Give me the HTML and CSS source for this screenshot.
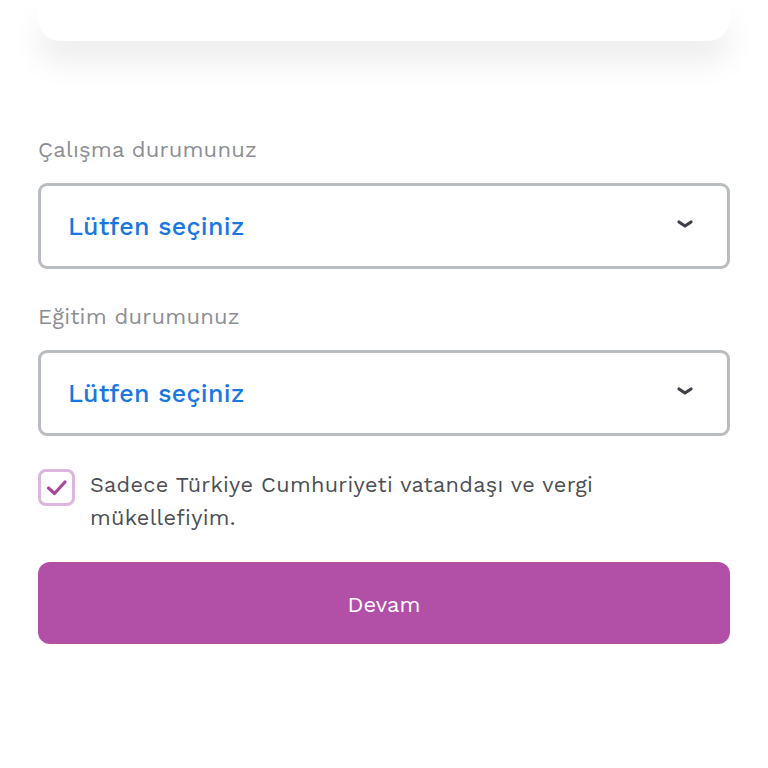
FILE: index.html
```html
<!DOCTYPE html>
<html lang="tr">

<head>
    <meta charset="UTF-8">
    <meta name="viewport" content="width=device-width, initial-scale=1.0">
    <title>Bilgiler</title>
    <link rel="stylesheet" href="styles.css">
</head>

<body>

    <!-- Top card (scrolled) -->
    <div class="top-card"></div>

    <form class="form">

        <div class="field">
            <label class="field-label" for="calisma">Çalışma durumunuz</label>
            <div class="select-box" id="calisma">
                <span class="select-text">Lütfen seçiniz</span>
                <svg class="chevron" width="18" height="10" viewBox="0 0 18 10">
                    <path d="M3 3 L9 7 L15 3" fill="none" stroke="#3d4046" stroke-width="3.2" stroke-linecap="round" stroke-linejoin="round"/>
                </svg>
            </div>
        </div>

        <div class="field">
            <label class="field-label" for="egitim">Eğitim durumunuz</label>
            <div class="select-box" id="egitim">
                <span class="select-text">Lütfen seçiniz</span>
                <svg class="chevron" width="18" height="10" viewBox="0 0 18 10">
                    <path d="M3 3 L9 7 L15 3" fill="none" stroke="#3d4046" stroke-width="3.2" stroke-linecap="round" stroke-linejoin="round"/>
                </svg>
            </div>
        </div>

        <!-- Checkbox -->
        <div class="check-row">
            <span class="check-box">
                <svg width="24" height="20" viewBox="0 0 24 20">
                    <path d="M3.5 10 L9.5 15.5 L20 4" fill="none" stroke="#a8479c" stroke-width="3.2" stroke-linecap="round" stroke-linejoin="round"/>
                </svg>
            </span>
            <span class="check-text">Sadece Türkiye Cumhuriyeti vatandaşı ve vergi mükellefiyim.</span>
        </div>

        <button type="button" class="main-btn">Devam</button>

    </form>

</body>

</html>
```

FILE: styles.css
```css
body {
    margin: 0;
    background-color: #fff;
    font-family: "Work Sans", "Open Sans", "Noto Sans", sans-serif;
    width: 768px;
    overflow: hidden;
}

/*-------------- Top card --------------*/
.top-card {
    margin: 0 38px;
    height: 41px;
    background-color: #fff;
    border-radius: 0 0 22px 22px;
    box-shadow: 0 22px 30px rgba(0, 0, 0, 0.07);
}

/*-------------- Form --------------*/
.form {
    display: flex;
    flex-direction: column;
    padding: 93px 38px 0 38px;
}

.field {
    display: flex;
    flex-direction: column;
    margin-bottom: 32px;
}

.field-label {
    font-size: 22px;
    color: #8b8e93;
    line-height: 32px;
    margin-bottom: 17px;
    letter-spacing: 0.2px;
}

.select-box {
    height: 80px;
    border: 3px solid #b9bcc0;
    border-radius: 9px;
    display: flex;
    align-items: center;
    justify-content: space-between;
    padding: 0 33px 0 27px;
}

.select-text {
    font-size: 25px;
    font-weight: 500;
    color: #1877e0;
    letter-spacing: 0.3px;
    margin-top: 1px;
}

.chevron {
    margin-top: -4px;
}

/*-------------- Checkbox --------------*/
.check-row {
    display: flex;
    align-items: flex-start;
    gap: 15px;
    margin-bottom: 28px;
}

.check-box {
    flex: none;
    width: 31px;
    height: 31px;
    border: 3px solid #ddb6df;
    border-radius: 8px;
    display: flex;
    align-items: center;
    justify-content: center;
    margin-top: 1px;
}

.check-text {
    font-size: 21.7px;
    line-height: 33px;
    color: #4b4e54;
    max-width: 540px;
    letter-spacing: 0.3px;
}

/*-------------- Button --------------*/
.main-btn {
    height: 82px;
    border: none;
    border-radius: 12px;
    background-color: #b24fa6;
    color: #fff;
    font-family: inherit;
    font-size: 22px;
    font-weight: 400;
    padding-top: 4px;
    cursor: pointer;
}
```
